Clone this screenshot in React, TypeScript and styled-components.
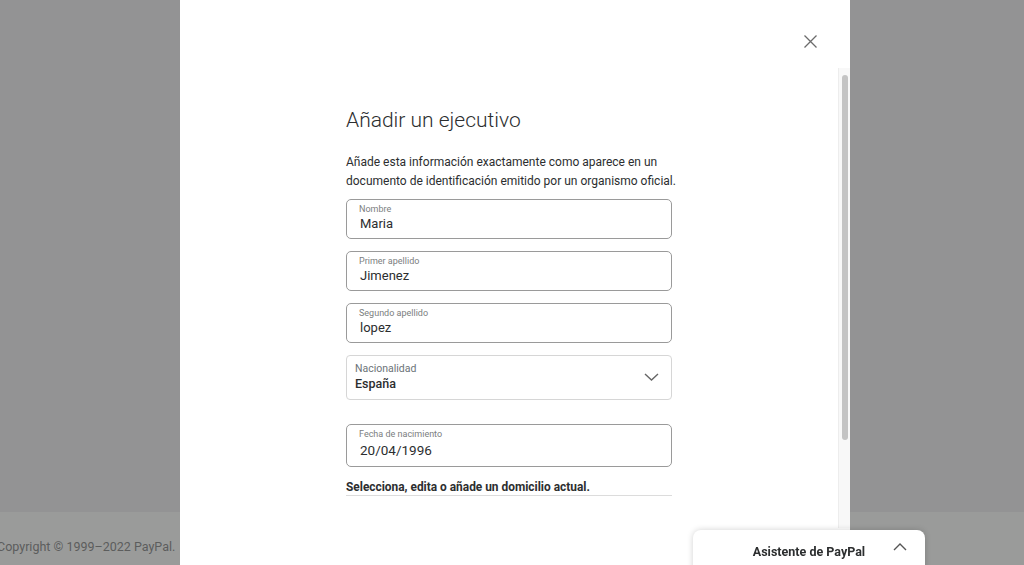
import styled, { createGlobalStyle } from 'styled-components'

const GlobalStyle = createGlobalStyle`
  html, body {
    margin: 0;
    padding: 0;
    height: 100%;
  }
  body {
    background: #939394;
    font-family: Roboto, "Noto Sans", sans-serif;
    color: #2c2e2f;
    overflow: hidden;
  }
`

const Page = styled.div`
  height: 100vh;
  display: flex;
  flex-direction: column;
`

const Backdrop = styled.div`
  flex: 1;
  background: #939394;
`

const Footer = styled.footer`
  height: 53px;
  background: #9a9b9a;
  padding-top: 26px;
  box-sizing: border-box;
`

const Copyright = styled.span`
  display: block;
  margin-left: -3px;
  font-size: 12.5px;
  line-height: 18px;
  color: #5c5d5d;
`

const Modal = styled.div`
  position: fixed;
  top: 0;
  bottom: 0;
  left: 180px;
  width: 670px;
  background: #fff;
  display: flex;
`

const Body = styled.div`
  flex: 1;
  display: flex;
  flex-direction: column;
  overflow: hidden;
`

const Header = styled.div`
  display: flex;
  justify-content: flex-end;
  padding: 28px 15px 0 0;
`

const CloseButton = styled.button`
  width: 26px;
  height: 26px;
  padding: 0;
  border: 0;
  background: none;
  display: flex;
  align-items: center;
  justify-content: center;
  cursor: pointer;
`

const Content = styled.div`
  width: 326px;
  margin: 0 0 0 166px;
  display: flex;
  flex-direction: column;
`

const Title = styled.h1`
  margin: 52px 0 0;
  font-size: 21px;
  line-height: 28px;
  font-weight: 300;
  color: #2c2e2f;
`

const Intro = styled.p`
  margin: 19px 0 8px;
  font-size: 12px;
  line-height: 19px;
  color: #2c2e2f;
  white-space: nowrap;
`

const Field = styled.div<{ $gap?: number; $tall?: boolean }>`
  box-sizing: border-box;
  border: 1px solid #9a9a9a;
  border-radius: 5px;
  padding: 4px 12px ${p => (p.$tall ? 7 : 6)}px;
  margin-bottom: ${p => p.$gap ?? 12}px;
  display: flex;
  flex-direction: column;
`

const Label = styled.span`
  font-size: 9px;
  line-height: 11px;
  color: #7b7e80;
`

const Value = styled.span<{ $large?: boolean }>`
  font-size: ${p => (p.$large ? 13.5 : 13)}px;
  line-height: ${p => (p.$large ? 17 : 16)}px;
  margin-top: ${p => (p.$large ? 2 : 1)}px;
  padding-left: 1px;
  color: #2c2e2f;
`

const Select = styled.div`
  box-sizing: border-box;
  border: 1px solid #d6d6d6;
  border-radius: 4px;
  padding: 6px 12px 7px 8px;
  margin-bottom: 24px;
  display: flex;
  align-items: center;
  justify-content: space-between;
`

const SelectText = styled.div`
  display: flex;
  flex-direction: column;
`

const SelectLabel = styled.span`
  font-size: 10.5px;
  line-height: 14px;
  color: #6c7378;
`

const SelectValue = styled.span`
  font-size: 12.5px;
  line-height: 16px;
  font-weight: 500;
  color: #2c2e2f;
`

const AddressLink = styled.div`
  margin-top: 12px;
  font-size: 11.9px;
  line-height: 16px;
  font-weight: 700;
  color: #2c2e2f;
  border-bottom: 1px solid #dcdcdc;
`

const ScrollTrack = styled.div`
  width: 12px;
  margin: 68px 0 37px;
  box-sizing: border-box;
  background: #f8f8f8;
  border-left: 1px solid #ededed;
  padding: 7px 2px 0 3px;
`

const ScrollThumb = styled.div`
  height: 365px;
  border-radius: 4px;
  background: #c4c4c4;
`

const Chat = styled.div`
  position: fixed;
  left: 693px;
  width: 232px;
  top: 530px;
  bottom: -10px;
  background: #fff;
  border-radius: 8px 8px 0 0;
  box-shadow: 0 0 6px rgba(0, 0, 0, 0.18);
  display: flex;
  justify-content: center;
  padding-top: 14px;
  box-sizing: border-box;
`

const ChatTitle = styled.span`
  font-size: 12.5px;
  line-height: 16px;
  font-weight: 700;
  color: #2c2e2f;
`

const ChatToggle = styled.span`
  position: absolute;
  right: 18px;
  top: 13px;
  display: flex;
`

type InputProps = { label: string; value: string; large?: boolean; gap?: number }

function Input({ label, value, large, gap }: InputProps) {
  return (
    <Field $gap={gap} $tall={large}>
      <Label>{label}</Label>
      <Value $large={large}>{value}</Value>
    </Field>
  )
}

export default function App() {
  return (
    <>
      <GlobalStyle />
      <Page>
        <Backdrop />
        <Footer>
          <Copyright>Copyright © 1999–2022 PayPal.</Copyright>
        </Footer>
      </Page>

      <Modal>
        <Body>
          <Header>
            <CloseButton aria-label="Cerrar">
              <svg width="13" height="13" viewBox="0 0 13 13">
                <path d="M0.5 0.5 L12.5 12.5 M12.5 0.5 L0.5 12.5" stroke="#6b6b6b" strokeWidth="1.3" />
              </svg>
            </CloseButton>
          </Header>
          <Content>
            <Title>Añadir un ejecutivo</Title>
            <Intro>
              Añade esta información exactamente como aparece en un
              <br />
              documento de identificación emitido por un organismo oficial.
            </Intro>
            <Input label="Nombre" value="Maria" />
            <Input label="Primer apellido" value="Jimenez" />
            <Input label="Segundo apellido" value="lopez" />
            <Select>
              <SelectText>
                <SelectLabel>Nacionalidad</SelectLabel>
                <SelectValue>España</SelectValue>
              </SelectText>
              <svg width="15" height="8" viewBox="0 0 15 8">
                <path d="M1 1 L7.5 7 L14 1" fill="none" stroke="#666" strokeWidth="1.4" />
              </svg>
            </Select>
            <Input label="Fecha de nacimiento" value="20/04/1996" large gap={0} />
            <AddressLink>Selecciona, edita o añade un domicilio actual.</AddressLink>
          </Content>
        </Body>
        <ScrollTrack>
          <ScrollThumb />
        </ScrollTrack>
      </Modal>

      <Chat>
        <ChatTitle>Asistente de PayPal</ChatTitle>
        <ChatToggle>
          <svg width="14" height="8" viewBox="0 0 14 8">
            <path d="M1 7 L7 1 L13 7" fill="none" stroke="#555" strokeWidth="1.4" />
          </svg>
        </ChatToggle>
      </Chat>
    </>
  )
}
